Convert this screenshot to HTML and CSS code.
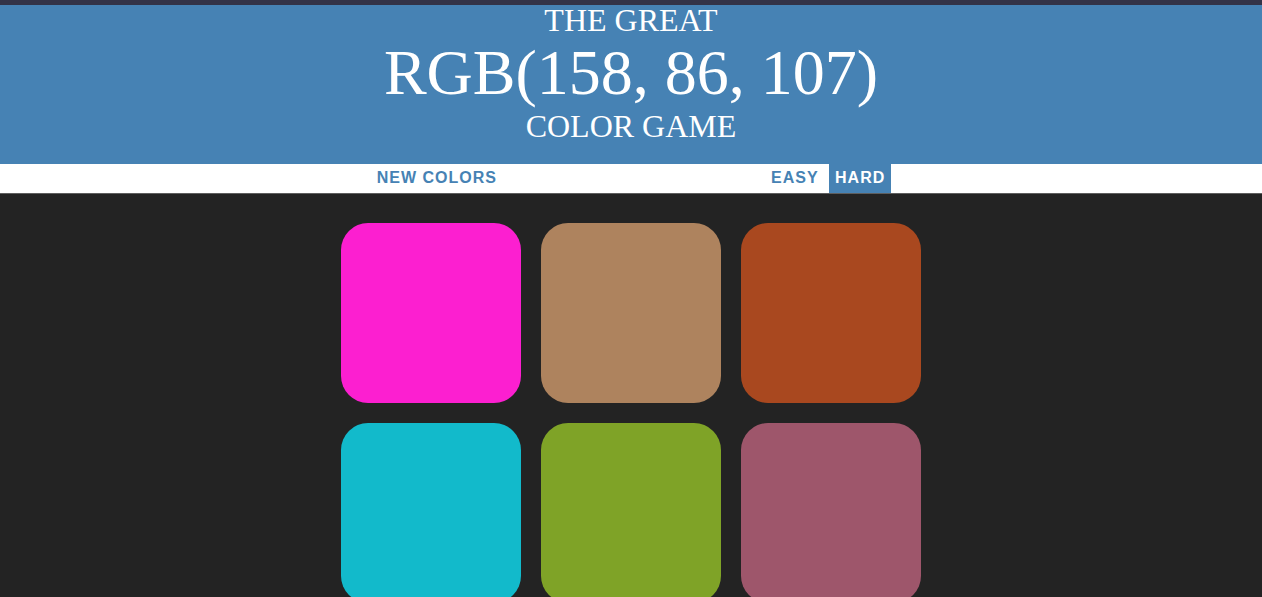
FILE: index.html
```html
<!DOCTYPE html>
<html lang="en">
<head>
<meta charset="utf-8">
<title>Color Game</title>
<link rel="stylesheet" href="styles.css">
</head>
<body>
<h1 class="header">
  <span class="line line-first">The Great</span>
  <span class="line color-display">RGB(158, 86, 107)</span>
  <span class="line">Color Game</span>
</h1>
<div class="stripe">
  <button class="btn btn-reset">New Colors</button>
  <span class="message"></span>
  <button class="btn">Easy</button>
  <button class="btn selected">Hard</button>
</div>
<div class="container">
  <div class="square sq1"></div>
  <div class="square sq2"></div>
  <div class="square sq3"></div>
  <div class="square sq4"></div>
  <div class="square sq5"></div>
  <div class="square sq6"></div>
</div>
</body>
</html>
```

FILE: styles.css
```css
html, body {
  margin: 0;
  padding: 0;
}
body {
  background: #232323;
  font-family: "Liberation Sans", Arial, sans-serif;
  overflow: hidden;
}
.header {
  margin: 0;
  padding: 0 0 20px;
  border-top: 5px solid #333347;
  background: #4682b4;
  color: #fff;
  font-family: "Liberation Serif", "Times New Roman", serif;
  font-weight: normal;
  font-size: 32px;
  line-height: 1.1;
  text-align: center;
  text-transform: uppercase;
}
.line {
  display: block;
}
.line-first {
  margin-top: -2px;
}
.color-display {
  font-size: 200%;
}
.stripe {
  background: #fff;
  height: 29px;
  border-bottom: 1px solid #5e5e5e;
  display: flex;
  justify-content: center;
  align-items: stretch;
  gap: 4.4px;
}
.btn {
  border: none;
  background: none;
  margin: 0;
  padding: 1px 6px;
  font-family: "Liberation Sans", Arial, sans-serif;
  font-size: 16px;
  font-weight: 700;
  letter-spacing: 1px;
  text-transform: uppercase;
  color: #4682b4;
  outline: none;
}
.btn.selected {
  background: #4682b4;
  color: #fff;
}
.btn-reset {
  margin-right: 1px;
}
.message {
  width: 20%;
}
.container {
  display: grid;
  grid-template-columns: repeat(3, 180px);
  gap: 20px;
  justify-content: center;
  padding-top: 29px;
}
.square {
  width: 180px;
  height: 180px;
  border-radius: 15%;
}
.sq1 { background: rgb(252, 31, 208); }
.sq2 { background: rgb(174, 131, 94); }
.sq3 { background: rgb(169, 72, 31); }
.sq4 { background: rgb(18, 186, 203); }
.sq5 { background: rgb(127, 163, 39); }
.sq6 { background: rgb(158, 86, 107); }
```
